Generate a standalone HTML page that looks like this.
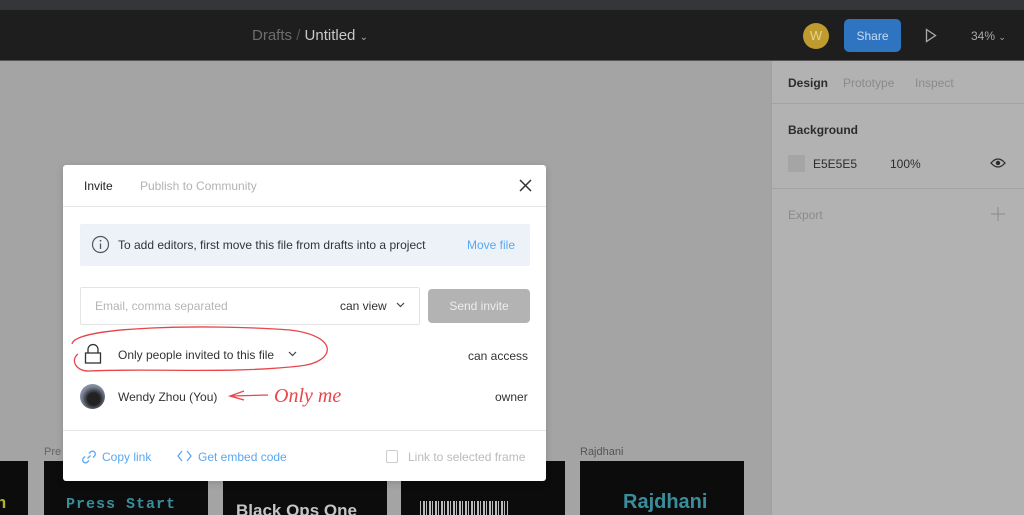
<!DOCTYPE html>
<html><head><style>
*{margin:0;padding:0;box-sizing:border-box}
body{width:1024px;height:515px;overflow:hidden;background:#a4a4a4;font-family:"Liberation Sans",sans-serif;position:relative}
.a{position:absolute}
</style></head><body>
<div class="a" style="left:0;top:0;width:1024px;height:10px;background:#35363a"></div>
<div class="a" style="left:0;top:10px;width:1024px;height:50px;background:#1e1e1e"></div>
<div class="a" style="left:0;top:60px;width:1024px;height:1px;background:#555"></div>
<div class="a" style="left:252px;top:27px;font-size:15px;color:#6d6d6d">Drafts <span style="color:#555">/</span> <span style="color:#c8c8c8">Untitled</span> <span style="color:#aaa;font-size:10px">&#8964;</span></div>
<div class="a" style="left:803px;top:23px;width:26px;height:26px;border-radius:50%;background:#bf9a2e;color:#e8d48a;font-size:13px;text-align:center;line-height:26px">W</div>
<div class="a" style="left:844px;top:19px;width:57px;height:33px;border-radius:5px;background:#2f74c0;color:#c9dbef;font-size:12px;text-align:center;line-height:34px">Share</div>
<svg class="a" style="left:925px;top:28px" width="12" height="15"><path d="M1.5 1.5 L10.5 7.5 L1.5 13.5 Z" fill="none" stroke="#aaa" stroke-width="1.3"/></svg>
<div class="a" style="left:971px;top:29px;font-size:12px;color:#aaa">34% <span style="font-size:9px">&#8964;</span></div>
<div class="a" style="left:771px;top:61px;width:253px;height:454px;background:#b2b2b2;border-left:1px solid #a0a0a0"></div>
<div class="a" style="left:788px;top:76px;font-size:12px;color:#2c2c2c;font-weight:bold">Design</div>
<div class="a" style="left:843px;top:76px;font-size:12px;color:#8a8a8a">Prototype</div>
<div class="a" style="left:915px;top:76px;font-size:12px;color:#8a8a8a">Inspect</div>
<div class="a" style="left:772px;top:103px;width:252px;height:1px;background:#a2a2a2"></div>
<div class="a" style="left:788px;top:123px;font-size:12px;color:#2c2c2c;font-weight:bold">Background</div>
<div class="a" style="left:788px;top:155px;width:17px;height:17px;background:#a5a5a5"></div>
<div class="a" style="left:813px;top:157px;font-size:12px;color:#2c2c2c">E5E5E5</div>
<div class="a" style="left:890px;top:157px;font-size:12px;color:#2c2c2c">100%</div>
<svg class="a" style="left:990px;top:157px" width="16" height="12"><path d="M1 6 Q8 -2 15 6 Q8 14 1 6Z" fill="none" stroke="#2c2c2c" stroke-width="1.3"/><circle cx="8" cy="6" r="2.2" fill="#2c2c2c"/></svg>
<div class="a" style="left:772px;top:188px;width:252px;height:1px;background:#a2a2a2"></div>
<div class="a" style="left:788px;top:208px;font-size:12px;color:#8a8a8a">Export</div>
<svg class="a" style="left:991px;top:207px" width="14" height="14"><path d="M7 0V14M0 7H14" stroke="#8a8a8a" stroke-width="1"/></svg>
<div class="a" style="left:0;top:461px;width:28px;height:54px;background:#0c0c0c"><span class="a" style="left:-4px;top:34px;color:#b5b02a;font:bold 17px 'Liberation Mono',monospace">n</span></div>
<div class="a" style="left:44px;top:446px;font-size:11px;color:#666">Pre</div>
<div class="a" style="left:44px;top:461px;width:164px;height:54px;background:#0c0c0c"><span class="a" style="left:22px;top:35px;color:#3a8e9c;font:bold 15px 'Liberation Mono',monospace;letter-spacing:1px">Press Start</span></div>
<div class="a" style="left:223px;top:461px;width:164px;height:54px;background:#0c0c0c;overflow:hidden"><span class="a" style="left:13px;top:40px;color:#c5c5c5;font:bold 17px 'Liberation Sans',sans-serif">Black Ops One</span></div>
<div class="a" style="left:401px;top:461px;width:164px;height:54px;background:#0c0c0c"><div class="a" style="left:19px;top:40px;width:88px;height:14px;background:repeating-linear-gradient(90deg,#bbb 0 1px,transparent 1px 3px,#bbb 3px 5px,transparent 5px 6px)"></div></div>
<div class="a" style="left:580px;top:446px;font-size:11px;color:#555">Rajdhani</div>
<div class="a" style="left:580px;top:461px;width:164px;height:54px;background:#0c0c0c"><span class="a" style="left:43px;top:30px;color:#3a8e9c;font:bold 20px 'Liberation Sans',sans-serif">Rajdhani</span></div>
<div class="a" style="left:63px;top:165px;width:483px;height:316px;background:#fff;border-radius:3px;box-shadow:0 2px 8px rgba(0,0,0,.15)">
 <div class="a" style="left:21px;top:14px;font-size:12px;color:#222">Invite</div>
 <div class="a" style="left:77px;top:14px;font-size:12px;color:#b3b3b3">Publish to Community</div>
 <svg class="a" style="left:456px;top:14px" width="13" height="13"><path d="M1 1L12 12M12 1L1 12" stroke="#333" stroke-width="1.5"/></svg>
 <div class="a" style="left:0;top:41px;width:483px;height:1px;background:#e6e6e6"></div>
 <div class="a" style="left:17px;top:59px;width:450px;height:42px;background:#edf2f9;border-radius:2px"></div>
 <svg class="a" style="left:28px;top:70px" width="19" height="19"><circle cx="9.5" cy="9.5" r="8" fill="none" stroke="#555" stroke-width="1.2"/><path d="M9.5 8.5V14" stroke="#555" stroke-width="1.3"/><circle cx="9.5" cy="5.8" r=".9" fill="#555"/></svg>
 <div class="a" style="left:55px;top:73px;font-size:12px;color:#333">To add editors, first move this file from drafts into a project</div>
 <div class="a" style="left:404px;top:73px;font-size:12px;color:#5ba8ee">Move file</div>
 <div class="a" style="left:17px;top:122px;width:340px;height:38px;border:1px solid #e4e4e4;border-radius:2px"></div>
 <div class="a" style="left:32px;top:134px;font-size:12px;color:#b5b5b5">Email, comma separated</div>
 <div class="a" style="left:277px;top:134px;font-size:12px;color:#333">can view</div>
 <svg class="a" style="left:333px;top:137px" width="9" height="6"><path d="M1 1L4.5 4.5L8 1" fill="none" stroke="#444" stroke-width="1.2"/></svg>
 <div class="a" style="left:365px;top:124px;width:102px;height:34px;background:#b3b3b3;border-radius:4px;color:#eee;font-size:12px;text-align:center;line-height:34px">Send invite</div>
 <svg class="a" style="left:20px;top:178px" width="20" height="22"><path d="M5 10V6.5a5 5 0 0 1 10 0V10" fill="none" stroke="#333" stroke-width="1.3"/><rect x="2.5" y="10" width="15" height="10" fill="none" stroke="#333" stroke-width="1.3"/></svg>
 <div class="a" style="left:55px;top:183px;font-size:12px;color:#333">Only people invited to this file</div>
 <svg class="a" style="left:225px;top:186px" width="9" height="6"><path d="M1 1L4.5 4.5L8 1" fill="none" stroke="#444" stroke-width="1.2"/></svg>
 <div class="a" style="left:405px;top:184px;font-size:12px;color:#333">can access</div>
 <div class="a" style="left:17px;top:219px;width:25px;height:25px;border-radius:50%;background:radial-gradient(circle at 55% 60%,#222 30%,#7a8496 60%,#b0b8c6)"></div>
 <div class="a" style="left:55px;top:225px;font-size:12px;color:#333">Wendy Zhou (You)</div>
 <div class="a" style="left:432px;top:225px;font-size:12px;color:#333">owner</div>
 <div class="a" style="left:0;top:265px;width:483px;height:1px;background:#e6e6e6"></div>
 <svg class="a" style="left:18px;top:284px" width="16" height="16"><path d="M6.5 9.5l3-3M8 4.5l1.5-1.5a2.8 2.8 0 0 1 4 4L12 8.5M8 11.5L6.5 13a2.8 2.8 0 0 1-4-4L4 7.5" fill="none" stroke="#5ba8ee" stroke-width="1.3"/></svg>
 <div class="a" style="left:39px;top:285px;font-size:12px;color:#5ba8ee">Copy link</div>
 <svg class="a" style="left:114px;top:285px" width="15" height="12"><path d="M5 1L1 6L5 11M10 1L14 6L10 11" fill="none" stroke="#5ba8ee" stroke-width="1.3"/></svg>
 <div class="a" style="left:135px;top:285px;font-size:12px;color:#5ba8ee">Get embed code</div>
 <div class="a" style="left:323px;top:285px;width:12px;height:13px;border:1px solid #ccc;border-radius:2px"></div>
 <div class="a" style="left:345px;top:285px;font-size:12px;color:#bbb">Link to selected frame</div>
</div>
<svg class="a" style="left:0;top:0" width="1024" height="515">
 <path d="M72 344 C75 326 210 324 290 330 C340 336 336 362 300 366 C230 374 150 368 90 371 C76 372 70 360 78 354" fill="none" stroke="#e8454a" stroke-width="1.3"/>
 <path d="M232 396 L268 395 M244 391 L230 396 L244 400" fill="none" stroke="#e8454a" stroke-width="1.3"/>
 <text x="274" y="402" font-family="Liberation Serif, serif" font-style="italic" font-size="20" fill="#e8454a">Only me</text>
</svg>
</body></html>
